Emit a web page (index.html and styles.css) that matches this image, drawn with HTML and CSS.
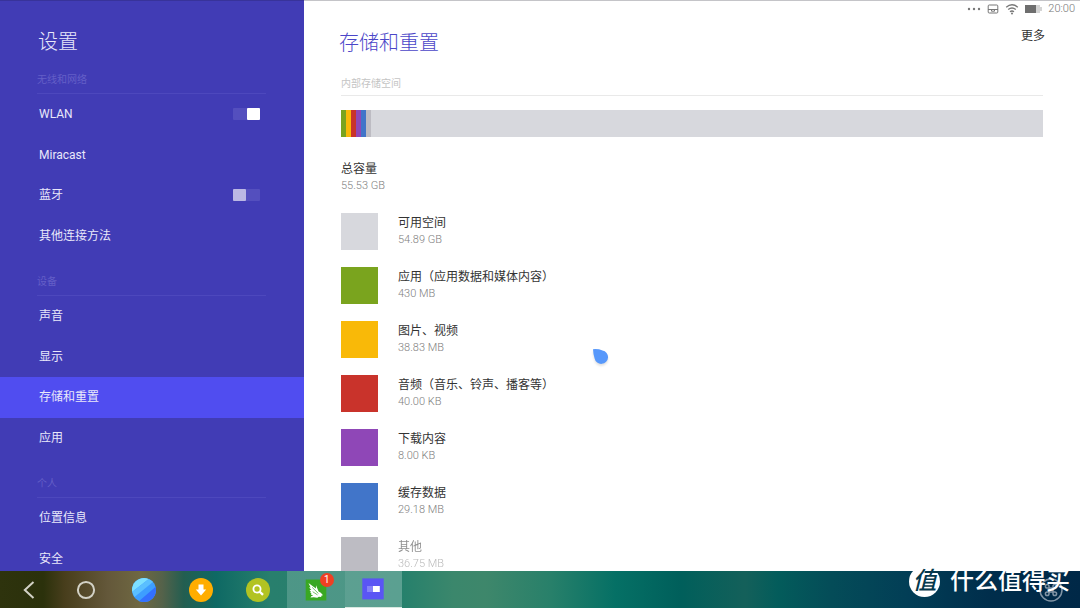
FILE: index.html
```html
<!DOCTYPE html>
<html lang="zh-CN">
<head>
<meta charset="utf-8">
<meta name="viewport" content="width=device-width, initial-scale=1">
<title>设置</title>
<link rel="stylesheet" href="styles.css">
</head>
<body>
<div class="screen">
  <nav class="sidebar">
    <h1 class="page-title">设置</h1>
    <h2 class="group-title">无线和网络</h2>
    <ul class="menu">
      <li class="menu-row"><label class="menu-link" for="wlan">WLAN</label><input class="toggle" id="wlan" type="checkbox" checked></li>
      <li class="menu-row"><a class="menu-link" href="#miracast">Miracast</a></li>
      <li class="menu-row"><label class="menu-link" for="bluetooth">蓝牙</label><input class="toggle" id="bluetooth" type="checkbox"></li>
      <li class="menu-row"><a class="menu-link" href="#more">其他连接方法</a></li>
    </ul>
    <h2 class="group-title">设备</h2>
    <ul class="menu">
      <li class="menu-row"><a class="menu-link" href="#sound">声音</a></li>
      <li class="menu-row"><a class="menu-link" href="#display">显示</a></li>
      <li class="menu-row menu-row-active"><a class="menu-link" href="#storage" aria-current="page">存储和重置</a></li>
      <li class="menu-row"><a class="menu-link" href="#apps">应用</a></li>
    </ul>
    <h2 class="group-title">个人</h2>
    <ul class="menu menu-short">
      <li class="menu-row"><a class="menu-link" href="#location">位置信息</a></li>
      <li class="menu-row"><a class="menu-link" href="#security">安全</a></li>
    </ul>
  </nav>

  <main class="content">
    <div class="status">
      <svg class="status-dots" viewBox="0 0 14 4" aria-hidden="true"><circle cx="2" cy="2" r="1.2"/><circle cx="7" cy="2" r="1.2"/><circle cx="12" cy="2" r="1.2"/></svg>
      <svg class="status-box" viewBox="0 0 12 10" aria-hidden="true"><rect x="1.200" y="1" width="9.600" height="8" rx="1"/><path d="M1 5.500h10M4.500 5.500v1.700h3V5.500"/></svg>
      <svg class="status-wifi" viewBox="0 0 14 12" aria-hidden="true"><path d="M1.2 4.2Q7-.8 12.8 4.2M3.2 6.6Q7 3.4 10.8 6.6M5 8.8Q7 7.2 9 8.8"/><circle cx="7" cy="10.4" r="1"/></svg>
      <svg class="status-battery" viewBox="0 0 17 8" aria-hidden="true"><path fill="#d4d4d4" d="M10 0h5v2h2v4h-2v2h-5z"/><path fill="#6e6e6e" d="M0 0h11v8H0z"/></svg>
      <time class="clock">20:00</time>
    </div>
    <header class="content-head">
      <h1 class="content-title">存储和重置</h1>
      <button class="more" type="button">更多</button>
    </header>
    <section class="storage">
      <h2 class="storage-title">内部存储空间</h2>
      <div class="usage" role="img" aria-label="内部存储空间">
        <span class="part green"></span><span class="part yellow"></span><span class="part red"></span><span class="part purple"></span><span class="part blue"></span><span class="part gray"></span>
      </div>
      <div class="total">
        <div class="name">总容量</div>
        <div class="size">55.53 GB</div>
      </div>
      <ul class="kinds">
        <li class="kind"><span class="swatch free"></span><div class="kind-text"><div class="name">可用空间</div><div class="size">54.89 GB</div></div></li>
        <li class="kind"><span class="swatch green"></span><div class="kind-text"><div class="name">应用（应用数据和媒体内容）</div><div class="size">430 MB</div></div></li>
        <li class="kind"><span class="swatch yellow"></span><div class="kind-text"><div class="name">图片、视频</div><div class="size">38.83 MB</div></div></li>
        <li class="kind"><span class="swatch red"></span><div class="kind-text"><div class="name">音频（音乐、铃声、播客等）</div><div class="size">40.00 KB</div></div></li>
        <li class="kind"><span class="swatch purple"></span><div class="kind-text"><div class="name">下载内容</div><div class="size">8.00 KB</div></div></li>
        <li class="kind"><span class="swatch blue"></span><div class="kind-text"><div class="name">缓存数据</div><div class="size">29.18 MB</div></div></li>
        <li class="kind kind-faded"><span class="swatch gray"></span><div class="kind-text"><div class="name">其他</div><div class="size">36.75 MB</div></div></li>
      </ul>
    </section>
  </main>

  <footer class="taskbar">
    <div class="tasks">
      <button class="task" type="button" aria-label="返回"><svg class="icon" viewBox="0 0 24 24"><path d="M16.5 4 7.8 12l8.7 8" fill="none" stroke="#d3d2c6" stroke-width="2"/></svg></button>
      <button class="task" type="button" aria-label="主页"><svg class="icon" viewBox="0 0 24 24"><circle cx="12" cy="12" r="8.1" fill="none" stroke="#d3d2c6" stroke-width="2"/></svg></button>
      <button class="task" type="button" aria-label="浏览器"><svg class="icon" viewBox="0 0 24 24"><defs><clipPath id="disc"><circle cx="12" cy="12" r="12"/></clipPath></defs><g clip-path="url(#disc)"><path fill="#3d9eff" d="M0 0h24v24H0z"/><path fill="#7de0ff" d="M0 0h18L0 14z"/><path fill="#5abfff" d="M18 0h6v1.500L2.500 19 0 14z"/><path fill="#3370ff" d="M24 8.500V24H6z"/></g></svg></button>
      <button class="task" type="button" aria-label="下载"><svg class="icon" viewBox="0 0 24 24"><circle cx="12" cy="12" r="12" fill="#ffad00"/><path fill="#fff" d="M9.500 6.500h5v5h2.700L12 17.500l-5.200-6h2.700z"/></svg></button>
      <button class="task" type="button" aria-label="搜索"><svg class="icon" viewBox="0 0 24 24"><circle cx="12" cy="12" r="12" fill="#b2c322"/><circle cx="11" cy="11" r="3.600" fill="none" stroke="#fff" stroke-width="1.8"/><path d="m13.500 13.500 3.500 3.400" stroke="#fff" stroke-width="2.300"/></svg></button>
      <button class="task task-open" type="button" aria-label="应用"><span class="app"><svg class="icon" viewBox="0 0 24 24"><path fill="#39a822" d="M1.700 1.500h20.600v21H1.700z"/><path fill="#fff" d="m4.500 5 7.400 5.400L12 7.200l2.600 6.400 2.200 1.200 2.200 2.400-1.400.2-.5 1.700-2.300-.4-1.500 1-3.600-.5-3.200.3.700-1.200 2-.7-2.400-1 .8-.8-1.700-1.500h1.300L5.500 12l1.800-.1L5 9.300l1.600.1z"/><path d="m8.200 9.400 6.200 6.100m-5.700-1.800 4.800 3.200" stroke="#39a822" stroke-width=".7"/></svg><span class="badge">1</span></span></button>
      <button class="task task-open task-active" type="button" aria-label="设置"><svg class="icon" viewBox="0 0 24 24"><path fill="#5a55f4" d="M1.300 1.400h21.400v21H1.300z"/><path fill="#8582f8" d="M6 9h6.500v6H6z"/><path fill="#fff" d="M12 9h6.800v6H12z"/></svg></button>
    </div>
    <button class="task task-tools" type="button" aria-label="工具"><svg class="icon" viewBox="0 0 24 24"><circle cx="12" cy="12" r="11"/><path d="M10 10H8.200A1.800 1.800 0 1 1 10 8.200V14h4v-4zM14 10V8.200A1.800 1.800 0 1 1 15.800 10zM14 14h1.800A1.800 1.800 0 1 1 14 15.800zM10 14v1.800A1.800 1.800 0 1 1 8.200 14z"/></svg></button>
  </footer>

  <svg class="pointer" viewBox="0 0 18 18" aria-hidden="true"><path fill="#5798fb" d="M2 2.200Q7.500 1.800 11.500 3.400A6.800 6.800 0 1 1 3.600 11.500Q2.200 7 2 2.200z"/></svg>
  <div class="watermark"><span class="watermark-logo">值</span><span class="watermark-text">什么值得买</span></div>
</div>
</body>
</html>
```
FILE: styles.css
```css
* {
  box-sizing: border-box;
}

body {
  margin: 0;
  font-family: Roboto, "Noto Sans CJK SC", sans-serif;
  font-size: 12px;
  line-height: 18px;
  color: #333;
  background: #fff;
}

h1,
h2,
ul {
  margin: 0;
  padding: 0;
  font-weight: 400;
  list-style: none;
}

button {
  padding: 0;
  border: 0;
  background: none;
  color: inherit;
  font: inherit;
}

svg {
  display: block;
}

.screen {
  position: relative;
  display: grid;
  grid-template-columns: 304px minmax(0, 1fr);
  grid-template-rows: minmax(0, 1fr) 37px;
  height: 100vh;
  overflow: hidden;
}

.sidebar {
  overflow: hidden;
  border-top: 1px solid #38339a;
  background: #413cb5;
  color: #e9e8fa;
}

.page-title {
  height: 53px;
  padding: 26px 38px 0;
  font-size: 20px;
  font-weight: 300;
  line-height: 30px;
}

.group-title {
  height: 40px;
  margin: 0 38px 0 37px;
  padding-top: 17px;
  border-bottom: 1px solid #4d48bd;
  color: #645fc7;
  font-size: 10px;
}

.menu {
  display: grid;
  grid-auto-rows: 1fr;
  min-height: 162px;
}

.menu-short {
  min-height: 81px;
}

.menu-row {
  display: flex;
  align-items: center;
  padding: 0 44px 0 39px;
}

.menu-row-active {
  background: #504df0;
}

.menu-link {
  flex: 1;
  color: inherit;
  text-decoration: none;
}

.toggle {
  appearance: none;
  display: flex;
  width: 27px;
  height: 12px;
  margin: 0;
  border-radius: 1px;
  background: #544fbe;
}

.toggle::before {
  content: "";
  width: 13px;
  border-radius: 1px;
  background: #bbb8e4;
}

.toggle:checked {
  justify-content: flex-end;
}

.toggle:checked::before {
  background: #fff;
}

.content {
  overflow: hidden;
  padding: 0 37px 0 35px;
  border-top: 1px solid #c4c4c8;
}

.status {
  display: flex;
  align-items: center;
  justify-content: flex-end;
  gap: 6px;
  height: 15px;
  margin-right: -32px;
  color: #777;
  font-size: 11px;
  fill: #777;
}

.status-dots {
  width: 14px;
  height: 4px;
}

.status-box {
  width: 12px;
  height: 10px;
  fill: none;
  stroke: #777;
}

.status-wifi {
  width: 14px;
  height: 12px;
}

.status-wifi path {
  fill: none;
  stroke: #777;
  stroke-width: 1.3;
}

.status-battery {
  width: 17px;
  height: 8px;
}

.content-head {
  display: flex;
  justify-content: space-between;
  height: 51px;
  padding-top: 11px;
}

.content-title {
  color: #4b46c8;
  font-size: 20px;
  font-weight: 300;
  line-height: 32px;
}

.more {
  height: 18px;
  margin-right: -2px;
}

.storage {
  padding-left: 2px;
}

.storage-title {
  height: 29px;
  padding-top: 8px;
  border-bottom: 1px solid #e9e9e9;
  color: #c4c4c4;
  font-size: 10px;
}

.usage {
  display: flex;
  height: 27px;
  margin-top: 14px;
  background: #d7d8dd;
}

.part {
  width: 5px;
}

.total {
  margin-top: 23px;
}

.size {
  margin-top: -1px;
  color: #999;
  font-size: 11px;
}

.clock,
.size {
  font-weight: 300;
}

.kinds {
  display: grid;
  gap: 17px;
  margin-top: 18px;
}

.kind {
  display: flex;
  gap: 20px;
  height: 37px;
}

.kind-text {
  padding-top: 1px;
}

.size {
  color: #808080;
}

.kind-faded .name,
.kind-faded .size {
  opacity: 0.55;
}

.swatch {
  width: 37px;
  height: 37px;
}

.free {
  background: #d7d8dd;
}

.green {
  background: #7aa41e;
}

.yellow {
  background: #f9b908;
}

.red {
  background: #c9332b;
}

.purple {
  background: #8f47b7;
}

.blue {
  background: #4175c9;
}

.gray {
  background: #bdbcc3;
}

.taskbar {
  grid-column: 1 / -1;
  display: flex;
  justify-content: space-between;
  background: linear-gradient(90deg, #2e330d 0, #2b310b 4%, #483e1c 6%, #64583a 10%, #6f6842 13%, #55624a 15%, #235e50 17%, #0e6964 20%, #287f6d 25%, #25806c 37%, #3b876c 42%, #3e876b 45%, #28806a 51%, #057065 57%, #005f5b 63%, #14605a 69%, #035c5b 72%, #044c58 77%, #023e56 84%, #002d4b 92%, #002847 100%);
}

.tasks {
  display: grid;
  grid-template-columns: repeat(7, 1fr);
  width: 402px;
}

.task {
  display: flex;
  align-items: center;
  justify-content: center;
}

.task-open {
  background: rgba(255, 255, 255, 0.18);
}

.task-active {
  background: rgba(255, 255, 255, 0.25);
  border-bottom: 1px solid #d8e8e1;
}

.icon {
  width: 24px;
  height: 24px;
}

.app {
  position: relative;
}

.badge {
  position: absolute;
  top: -5px;
  right: -6px;
  width: 14px;
  height: 14px;
  border-radius: 50%;
  background: #ef4023;
  color: #fff;
  font-size: 10px;
  line-height: 14px;
}

.task-tools {
  width: 58px;
  fill: none;
  stroke: #8194a5;
  stroke-width: 1.5;
}

.pointer {
  position: absolute;
  top: 347px;
  left: 591px;
  width: 18px;
  height: 18px;
  filter: drop-shadow(0 2px 1px rgba(0, 0, 0, 0.12));
}

.watermark {
  position: absolute;
  right: 10px;
  bottom: 11px;
  display: flex;
  align-items: center;
  gap: 10px;
  color: #fff;
  font-size: 24px;
  font-weight: 500;
  line-height: 32px;
  pointer-events: none;
}

.watermark-logo {
  width: 31px;
  height: 31px;
  border-radius: 50%;
  background: #fff;
  color: #04384c;
  font-style: italic;
  line-height: 31px;
  text-align: center;
}
```
